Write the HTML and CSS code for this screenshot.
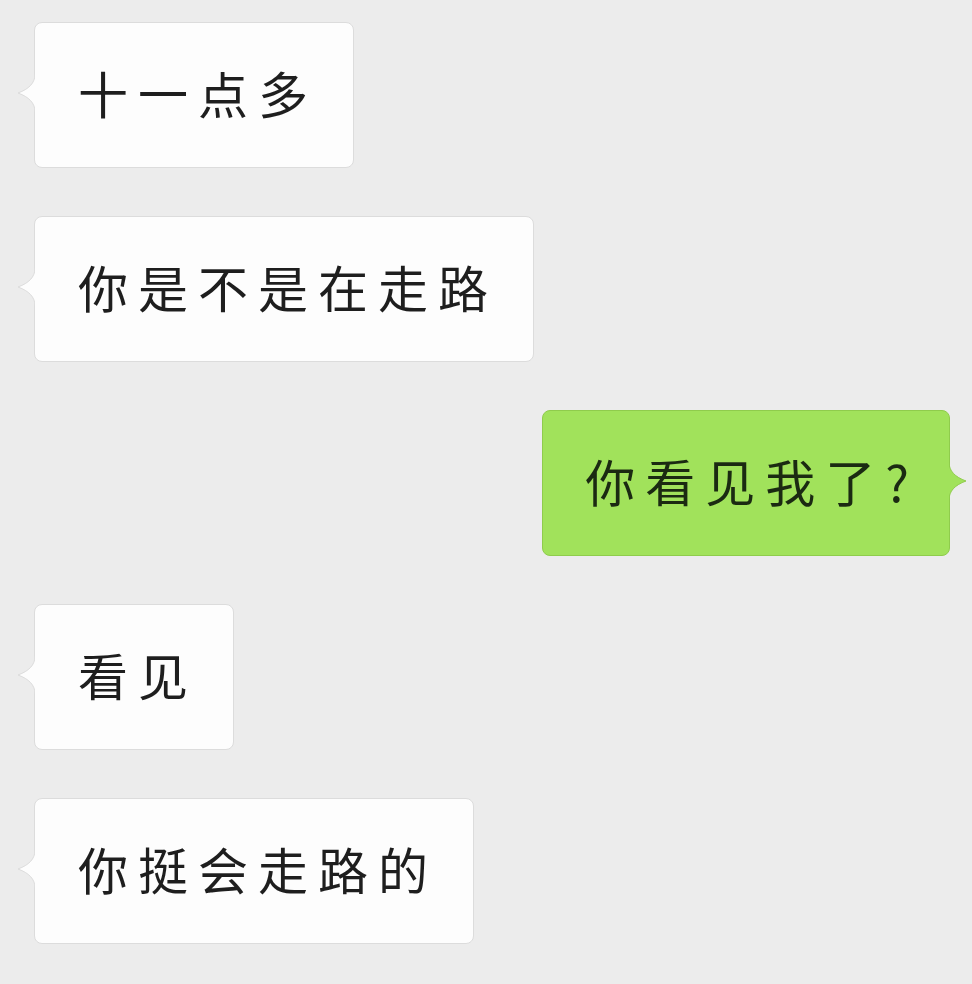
FILE: index.html
```html
<!DOCTYPE html>
<html lang="zh-CN">
<head>
  <meta charset="UTF-8">
  <title>聊天记录</title>
  <link rel="stylesheet" href="styles.css">
</head>
<body>

  <div class="chat">
    <div class="row">
      <div class="bubble">十一点多
        <svg class="tail" viewBox="0 0 18 40"><path d="M18 1 C18 10 12 16 1 20 C12 24 18 30 18 39"/></svg>
      </div>
    </div>

    <div class="row">
      <div class="bubble">你是不是在走路
        <svg class="tail" viewBox="0 0 18 40"><path d="M18 1 C18 10 12 16 1 20 C12 24 18 30 18 39"/></svg>
      </div>
    </div>

    <div class="row mine">
      <div class="bubble green">你看见我了?
        <svg class="tail" viewBox="0 0 18 40"><path d="M0 1 C0 10 6 16 17 20 C6 24 0 30 0 39"/></svg>
      </div>
    </div>

    <div class="row">
      <div class="bubble">看见
        <svg class="tail" viewBox="0 0 18 40"><path d="M18 1 C18 10 12 16 1 20 C12 24 18 30 18 39"/></svg>
      </div>
    </div>

    <div class="row">
      <div class="bubble">你挺会走路的
        <svg class="tail" viewBox="0 0 18 40"><path d="M18 1 C18 10 12 16 1 20 C12 24 18 30 18 39"/></svg>
      </div>
    </div>
  </div>

</body>
</html>
```

FILE: styles.css
```css
* {
  box-sizing: border-box;
}

body {
  margin: 0;
  background: #ececec;
  font-family: "Noto Sans CJK SC", "Noto Sans", sans-serif;
  color: #1e1e1e;
}

.chat {
  display: flex;
  flex-direction: column;
  gap: 48px;
  padding: 22px 22px 0 34px;
}

.row {
  display: flex;
}

.row.mine {
  justify-content: flex-end;
}

.bubble {
  position: relative;
  padding: 41px 35px 47px 43px;
  font-size: 50px;
  line-height: 56px;
  letter-spacing: 10px;
  background: #fdfdfd;
  border: 1px solid #dcdcdc;
  border-radius: 8px;
  white-space: nowrap;
}

.bubble .tail {
  position: absolute;
  left: -18px;
  top: 50%;
  width: 18px;
  height: 40px;
  margin-top: -22px;
}

.bubble .tail path {
  fill: #fdfdfd;
  stroke: #dcdcdc;
  stroke-width: 1;
}

.bubble.green {
  padding: 41px 30px 47px 42px;
  background: #a1e25b;
  border-color: #8fcc4c;
  color: #1b2a12;
}

.bubble.green .tail {
  left: auto;
  right: -18px;
}

.bubble.green .tail path {
  fill: #a1e25b;
  stroke: #8fcc4c;
}
```
